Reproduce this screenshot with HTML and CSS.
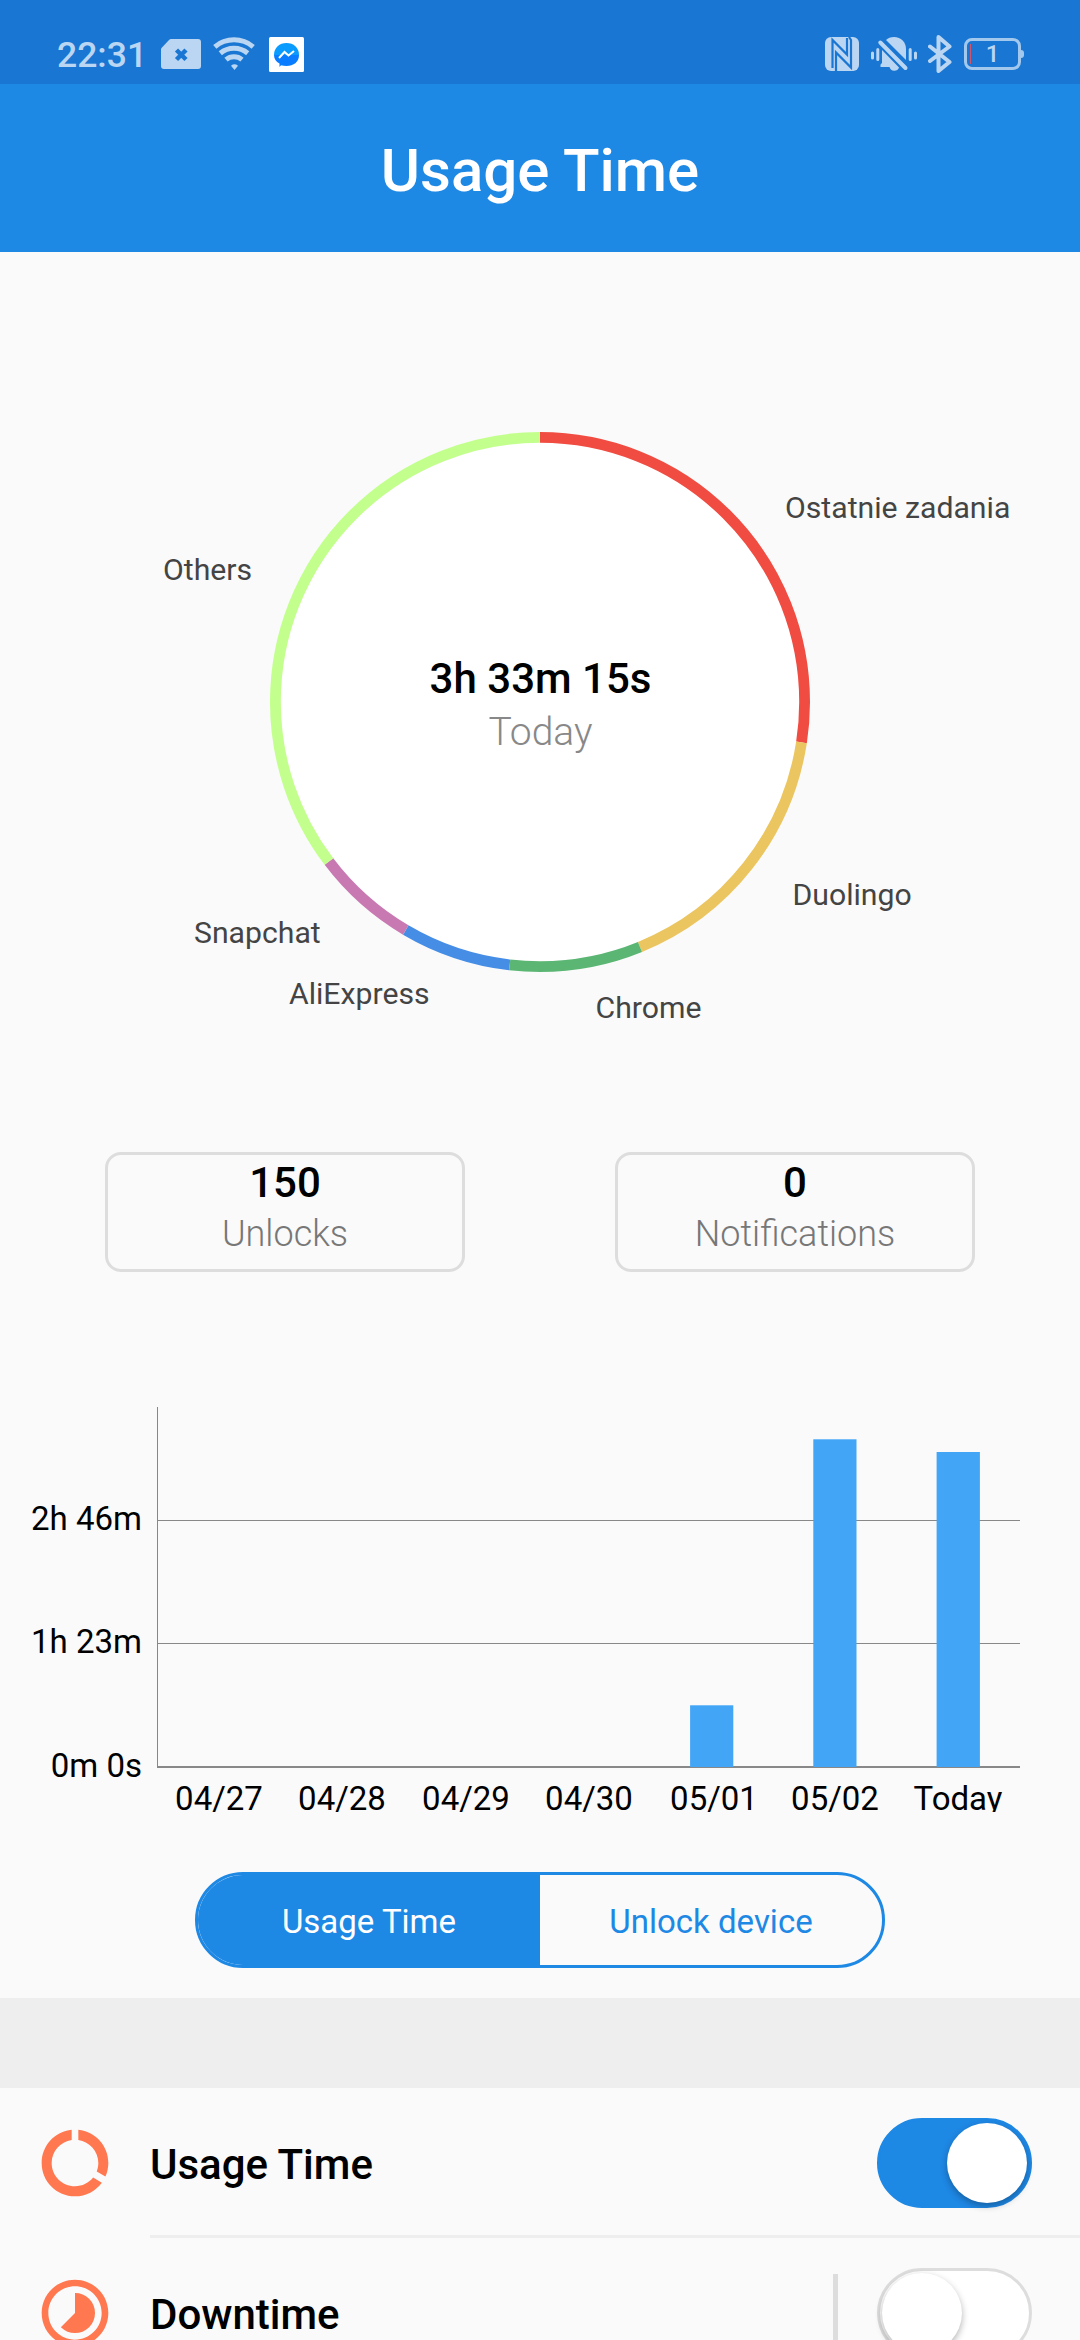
FILE: index.html
```html
<!DOCTYPE html>
<html lang="en">
<head>
    <meta charset="UTF-8">
    <meta name="viewport" content="width=device-width, initial-scale=1.0">
    <title>Usage Time</title>
    <link rel="stylesheet" href="styles.css">
</head>
<body>
    <div class="status-bar">
        <div class="status-left">
            <span class="clock">22:31</span>
            <svg class="icon-sim" width="40" height="30" viewBox="0 0 40 30">
                <path d="M10 0H37a3 3 0 0 1 3 3V27a3 3 0 0 1-3 3H3a3 3 0 0 1-3-3V9.500L8 1Q9 0 10 0Z"/>
                <path class="cut" d="M15.500 11l9.500 9.500M25 11l-9.500 9.500"/>
            </svg>
            <svg class="icon-wifi" width="42" height="34" viewBox="0 0 42 34">
                <path class="line" d="M1.800 9.800A30 30 0 0 1 40.200 9.800M7.300 16.300A21.500 21.500 0 0 1 34.700 16.300M13 22.700A12.500 12.500 0 0 1 29 22.700"/>
                <path d="M18 28.700a5.500 5.500 0 0 1 7 0L21.500 33z"/>
            </svg>
            <svg class="icon-messenger" width="35" height="35" viewBox="0 0 35 35">
                <rect width="35" height="35" rx="1.500" fill="#fff"/>
                <path fill="#0a9bff" d="M5 18C5 10.500 10.500 6 17.500 6S30 10.500 30 18z"/>
                <path fill="#0a7cff" d="M5 18H30C30 25 24.500 29 17.500 29q-3 0-5.500-.700L10.500 30V26.500C7 24.500 5 22 5 18z"/>
                <path fill="none" stroke="#fff" stroke-width="2" d="M10 21l5.500-6 4 3.500 5.500-4.500"/>
            </svg>
        </div>
        <div class="status-right">
            <svg class="icon-nfc" width="34" height="34" viewBox="0 0 34 34">
                <rect width="34" height="34" rx="6"/>
                <path class="cut" d="M7.500 31V3L22 17.500V1"/>
                <path class="cut" d="M11 34V15.500L26 30.500V3L24 0"/>
            </svg>
            <svg class="icon-bell" width="46" height="34" viewBox="0 0 46 34">
                <path d="M15 3C17 1 19.500 0 23 0c7 0 12 5 12 12v11z"/>
                <path d="M11 13 28 30.500A5 5 0 0 1 18.500 30H9.500V27.500L11 26z"/>
                <path class="line slash" d="M9.300 5.500 34.500 31"/>
                <path class="line" d="M1.500 16v5M6.800 12.500v10M39.200 12.500v10M44.500 16v5"/>
            </svg>
            <svg class="icon-bluetooth" width="24" height="38" viewBox="0 0 24 38">
                <path class="line" d="M2 11.500 21.500 27 10.500 36V2L21.500 11.500 2 26"/>
            </svg>
            <div class="battery"><span>1</span></div>
        </div>
    </div>

    <header>
        <h1>Usage Time</h1>
    </header>

    <!-- Pie chart with today's apps, each slice in degrees -->
    <svg class="pie" width="1080" height="900" viewBox="0 252 1080 900">
        <circle cx="540" cy="702" r="262" fill="#fff"/>
        <g class="slices" transform="rotate(-90 540 702)">
            <circle cx="540" cy="702" r="264.600" pathLength="360" stroke="#f04c42" stroke-dasharray="98.800 360"/>
            <circle cx="540" cy="702" r="264.600" pathLength="360" stroke="#ebc55f" stroke-dasharray="59 360" stroke-dashoffset="-98.800"/>
            <circle cx="540" cy="702" r="264.600" pathLength="360" stroke="#5bb674" stroke-dasharray="28.800 360" stroke-dashoffset="-157.800"/>
            <circle cx="540" cy="702" r="264.600" pathLength="360" stroke="#468de6" stroke-dasharray="23.900 360" stroke-dashoffset="-186.600"/>
            <circle cx="540" cy="702" r="264.600" pathLength="360" stroke="#c879b2" stroke-dasharray="22.400 360" stroke-dashoffset="-210.500"/>
            <circle cx="540" cy="702" r="264.600" pathLength="360" stroke="#c2ff8c" stroke-dasharray="127.100 360" stroke-dashoffset="-232.900"/>
        </g>
        <text class="pie-total" x="540.500" y="693">3h 33m 15s</text>
        <text class="pie-day" x="540.500" y="745">Today</text>
        <g class="pie-labels">
            <text x="785" y="518">Ostatnie zadania</text>
            <text x="792.500" y="905">Duolingo</text>
            <text x="595.500" y="1018">Chrome</text>
            <text x="289" y="1004">AliExpress</text>
            <text x="194" y="943">Snapchat</text>
            <text x="163" y="580">Others</text>
        </g>
    </svg>

    <div class="counters">
        <div class="counter">
            <strong>150</strong>
            <span>Unlocks</span>
        </div>
        <div class="counter">
            <strong>0</strong>
            <span>Notifications</span>
        </div>
    </div>

    <!-- Last 7 days -->
    <svg class="bars" width="1080" height="405" viewBox="0 1407 1080 405">
        <g class="grid">
            <rect x="157" y="1407" width="1" height="361"/>
            <rect x="157" y="1520" width="863" height="1"/>
            <rect x="157" y="1643" width="863" height="1"/>
            <rect x="157" y="1766" width="863" height="2"/>
        </g>
        <g class="bar">
            <rect x="690.100" y="1705.300" width="43.200" height="61.700"/>
            <rect x="813.300" y="1439.300" width="43.200" height="327.700"/>
            <rect x="936.600" y="1452" width="43.300" height="315"/>
        </g>
        <g class="y-labels">
            <text x="142" y="1530">2h 46m</text>
            <text x="142" y="1653">1h 23m</text>
            <text x="142" y="1777">0m 0s</text>
        </g>
        <g class="x-labels">
            <text x="219" y="1810">04/27</text>
            <text x="342" y="1810">04/28</text>
            <text x="466" y="1810">04/29</text>
            <text x="589" y="1810">04/30</text>
            <text x="714" y="1810">05/01</text>
            <text x="835" y="1810">05/02</text>
            <text x="958" y="1810">Today</text>
        </g>
    </svg>

    <div class="segmented">
        <button class="active">Usage Time</button>
        <button>Unlock device</button>
    </div>

    <div class="separator"></div>

    <div class="settings">
        <div class="row">
            <svg class="row-icon" viewBox="0 0 24 24">
                <path d="M13 2.050v3.030c3.390.490 6 3.390 6 6.920 0 .900-.180 1.750-.480 2.540l2.600 1.530c.560-1.240.880-2.620.880-4.070 0-5.180-3.950-9.450-9-9.950zM12 19c-3.870 0-7-3.130-7-7 0-3.530 2.610-6.430 6-6.920V2.050c-5.060.500-9 4.760-9 9.950 0 5.520 4.470 10 9.990 10 3.310 0 6.240-1.610 8.060-4.090l-2.600-1.530C16.170 17.980 14.210 19 12 19z"/>
            </svg>
            <div class="row-body">
                <span class="row-title">Usage Time</span>
                <span class="toggle on"></span>
            </div>
        </div>
        <div class="row">
            <svg class="row-icon" viewBox="0 0 24 24">
                <path d="M16.240 7.760A5.974 5.974 0 0 0 12 6v6l-4.240 4.240c2.340 2.340 6.140 2.340 8.490 0a5.990 5.990 0 0 0-.010-8.480zM12 2C6.480 2 2 6.480 2 12s4.480 10 10 10 10-4.480 10-10S17.520 2 12 2zm0 18c-4.420 0-8-3.580-8-8s3.580-8 8-8 8 3.580 8 8-3.580 8-8 8z"/>
            </svg>
            <div class="row-body">
                <span class="row-title">Downtime</span>
                <span class="row-line"></span>
                <span class="toggle"></span>
            </div>
        </div>
    </div>
</body>
</html>
```
FILE: styles.css
```css
:root {
    --primary: #1e88e5;
    --primary-dark: #1976d2;
    --background: #fafafa;
    --status-icon: #bbd6f2;
    --border: #dddddd;
}

* {
    margin: 0;
    padding: 0;
    box-sizing: border-box;
}

body {
    width: 1080px;
    height: 2340px;
    overflow: hidden;
    background-color: var(--background);
    color: #000;
    font-family: Roboto, sans-serif;
}

svg {
    display: block;
    flex-shrink: 0;
}

/* status bar */
.status-bar {
    display: flex;
    justify-content: space-between;
    height: 84px;
    padding: 35px 56px 0 57px;
    background-color: var(--primary-dark);
    color: var(--status-icon);
}

.status-left, .status-right {
    display: flex;
    align-items: center;
    height: 38px;
}

.status-bar svg {
    fill: var(--status-icon);
}

.status-bar .cut {
    fill: none;
    stroke: var(--primary-dark);
    stroke-width: 4.5;
}

.status-bar .line {
    fill: none;
    stroke: var(--status-icon);
    stroke-width: 5;
}

.clock {
    width: 104px;
    font-size: 35.5px;
    font-weight: 500;
    line-height: 38px;
    padding-top: 2px;
}

.icon-wifi {
    margin-left: 12px;
}

.icon-messenger {
    margin-left: 14px;
}

.status-bar .icon-nfc .cut {
    stroke-width: 2.2;
}

.icon-bell {
    margin-left: 12px;
}

.status-bar .icon-bell .line {
    stroke-width: 3;
    stroke-linecap: round;
}

.status-bar .icon-bell .slash {
    stroke-width: 4;
}

.icon-bluetooth {
    margin-left: 11px;
}

.status-bar .icon-bluetooth .line {
    stroke-width: 4;
    stroke-linejoin: round;
    stroke-linecap: round;
}

.battery {
    position: relative;
    width: 57px;
    height: 32px;
    margin-left: 12px;
    margin-right: 3px;
    border: 3px solid #a3c8ed;
    border-radius: 8px;
    font-size: 24px;
    font-weight: 500;
    line-height: 27px;
    text-align: center;
}

.battery::before {
    content: "";
    position: absolute;
    left: 3px;
    top: 3px;
    width: 1px;
    height: 20px;
    background-color: #d3536b;
}

.battery::after {
    content: "";
    position: absolute;
    right: -6px;
    top: 9px;
    width: 3px;
    height: 8px;
    border-radius: 0 3px 3px 0;
    background-color: #a3c8ed;
}

header {
    display: flex;
    justify-content: center;
    align-items: center;
    height: 168px;
    padding-top: 5px;
    background-color: var(--primary);
    color: #fff;
}

h1 {
    font-size: 60px;
    font-weight: 500;
    line-height: 72px;
}

/* pie */
.slices circle {
    fill: none;
    stroke-width: 10.8;
}

.pie-total {
    font-size: 42px;
    font-weight: 500;
    text-anchor: middle;
}

.pie-day {
    font-size: 39px;
    font-weight: 300;
    fill: #888;
    text-anchor: middle;
}

.pie-labels {
    font-size: 30.2px;
    fill: #444;
}

/* counters */
.counters {
    display: flex;
    gap: 150px;
    padding: 0 105px;
}

.counter {
    display: flex;
    flex-direction: column;
    align-items: center;
    width: 360px;
    height: 120px;
    padding-top: 2px;
    border: 3px solid var(--border);
    border-radius: 16px;
}

.counter strong {
    font-size: 42px;
    font-weight: 500;
    line-height: 52px;
}

.counter span {
    font-size: 36px;
    font-weight: 300;
    line-height: 51px;
    color: #777;
}

/* bar chart */
.bars {
    margin-top: 135px;
    overflow: hidden;
    font-size: 33px;
}

.grid {
    fill: #888;
}

.bar {
    fill: #42a5f5;
}

.y-labels {
    text-anchor: end;
}

.x-labels {
    text-anchor: middle;
}

.segmented {
    display: flex;
    width: 690px;
    height: 96px;
    margin: 60px auto 30px;
    border: 3px solid var(--primary);
    border-radius: 48px;
    overflow: hidden;
}

.segmented button {
    flex: 1;
    padding-top: 2px;
    border: none;
    background: none;
    color: var(--primary);
    font-family: inherit;
    font-size: 33px;
}

.segmented .active {
    background-color: var(--primary);
    color: #fff;
}

.separator {
    height: 90px;
    background-color: #eee;
}

/* settings */
.row {
    display: flex;
    align-items: center;
    height: 150px;
    padding-left: 35px;
}

.row-icon {
    width: 80px;
    height: 80px;
    fill: #ff7850;
}

.row-body {
    display: flex;
    flex: 1;
    align-items: center;
    height: 150px;
    margin-left: 35px;
    padding-top: 3px;
    padding-right: 48px;
    border-bottom: 3px solid #eee;
}

.row-title {
    flex: 1;
    padding-top: 3px;
    font-size: 42px;
    font-weight: 500;
}

.row-line {
    width: 5px;
    height: 78px;
    margin-right: 39px;
    background-color: var(--border);
}

.toggle {
    width: 155px;
    height: 90px;
    padding: 2px;
    border: 3px solid var(--border);
    border-radius: 45px;
    background-color: #fff;
}

.toggle::before {
    content: "";
    display: block;
    width: 80px;
    height: 80px;
    border-radius: 50%;
    background-color: #fff;
    box-shadow: 0 3px 7px rgba(0, 0, 0, 0.3);
}

.toggle.on {
    border-color: var(--primary);
    background-color: var(--primary);
}

.toggle.on::before {
    margin-left: auto;
}
```
